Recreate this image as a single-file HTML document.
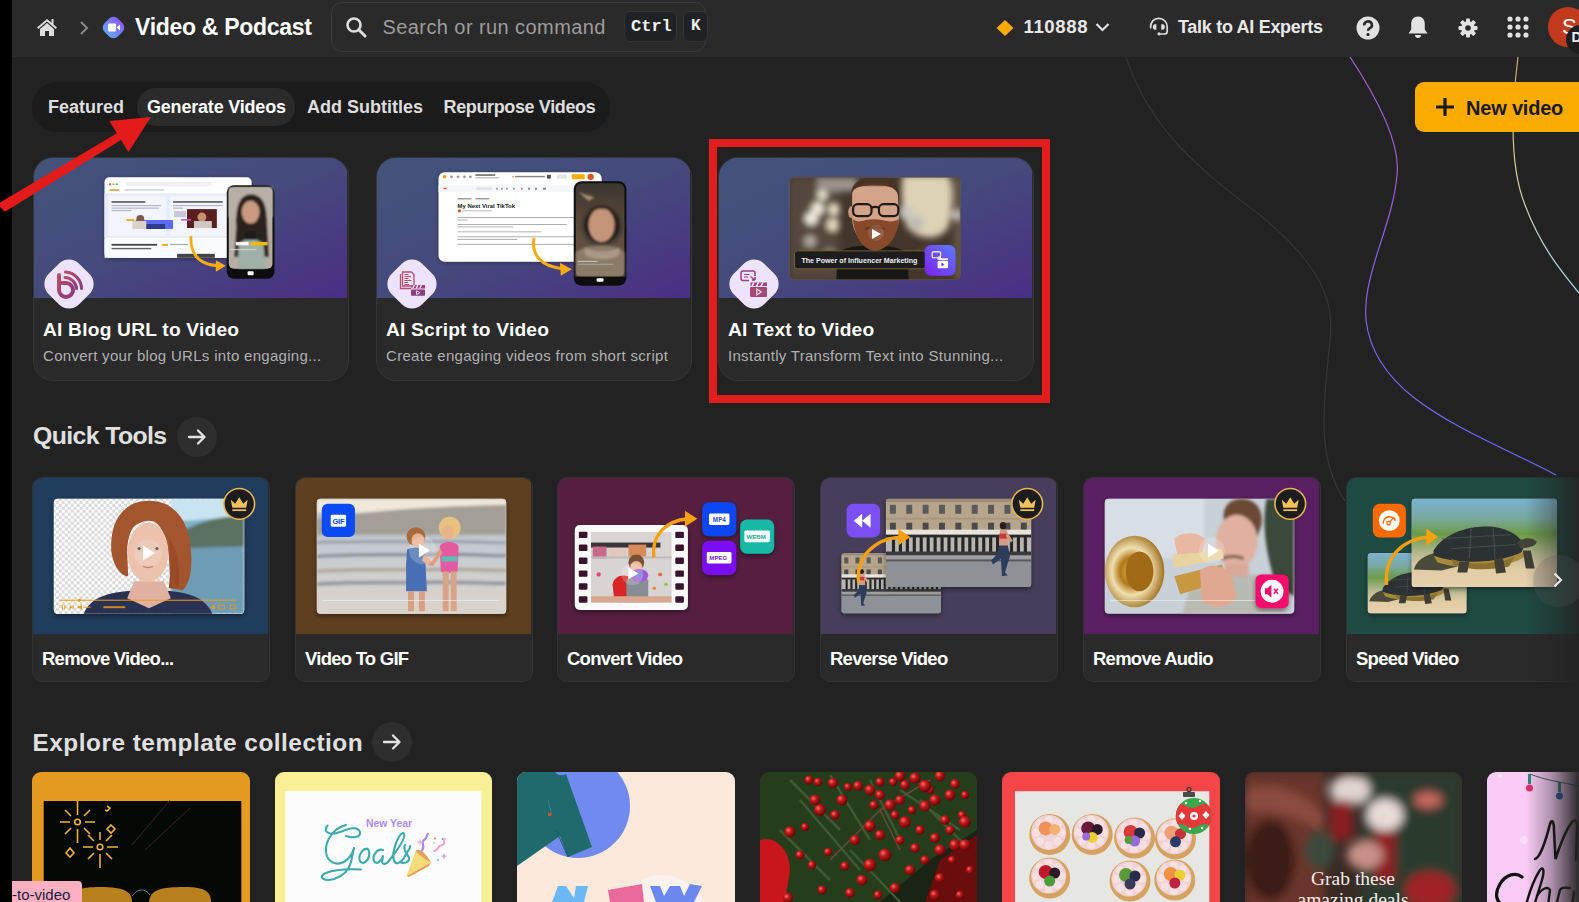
<!DOCTYPE html>
<html><head><meta charset="utf-8">
<style>
*{box-sizing:border-box;margin:0;padding:0}
html,body{width:1579px;height:902px;overflow:hidden;background:#222222;font-family:"Liberation Sans",sans-serif;color:#fff}
body{position:relative}
.a{position:absolute}
.strip{left:0;top:0;width:12px;height:902px;background:#000}
.hdr{left:12px;top:0;width:1567px;height:57px;background:#2a2a2a}
.t{position:absolute;white-space:nowrap;line-height:1}
.b{font-weight:bold}
.card{position:absolute;top:157px;width:316px;height:224px;border-radius:20px;background:#2a2a2a;border:1px solid #363636;overflow:hidden}
.card .img{position:absolute;left:-1px;top:-1px;width:100%;height:141px;background:linear-gradient(110deg,#40557a 0%,#444a7c 50%,#4a3282 100%)}
.card .ic{position:absolute;left:10px;top:101px;width:50px;height:50px}
.card .ttl{position:absolute;left:9px;top:161.8px;font-size:19.2px;letter-spacing:0.2px;font-weight:bold;color:#fff;white-space:nowrap;line-height:1}
.card .sub{position:absolute;left:9px;top:189.5px;font-size:15px;letter-spacing:0.3px;color:#b0b0b0;white-space:nowrap;line-height:1}
.qc{position:absolute;top:477px;width:238px;height:205px;border-radius:10px;background:#2a2a2a;border:1px solid #333;overflow:hidden}
.qc .img{position:absolute;left:-1px;top:-1px;width:100%;height:157px}
.qc .ttl{position:absolute;left:9px;top:171.8px;font-size:18.5px;letter-spacing:-0.75px;font-weight:bold;color:#fff;white-space:nowrap;line-height:1}
.tc{position:absolute;top:772px;width:218px;height:140px;border-radius:8px;overflow:hidden}
</style></head>
<body>
<div class="a strip"></div>
<div class="a hdr"></div>

<!-- background curves -->
<svg class="a" style="left:0;top:57px" width="1579" height="845" viewBox="0 57 1579 845">
  <path d="M1126 57 C1150 130 1200 170 1260 215 C1320 265 1335 300 1330 340 C1322 420 1318 460 1345 501" fill="none" stroke="#363636" stroke-width="1.2"/>
  <defs><linearGradient id="pgr" gradientUnits="userSpaceOnUse" x1="0" y1="57" x2="0" y2="475"><stop offset="0" stop-color="#a85cd0"/><stop offset="0.5" stop-color="#8a60e8"/><stop offset="1" stop-color="#6a6af8"/></linearGradient><linearGradient id="ygr" gradientUnits="userSpaceOnUse" x1="0" y1="57" x2="0" y2="293"><stop offset="0" stop-color="#c8a860"/><stop offset="0.5" stop-color="#d8d0a0"/><stop offset="1" stop-color="#a0d8e8"/></linearGradient></defs><path d="M1350 57 C1385 110 1400 150 1397 175 C1393 225 1362 275 1366 320 C1375 400 1470 430 1556 475" fill="none" stroke="url(#pgr)" stroke-width="1.2"/>
  <path d="M1518 57 C1510 120 1511 170 1525 205 C1540 245 1560 270 1579 293" fill="none" stroke="url(#ygr)" stroke-width="1.2"/>
</svg>

<!-- header content -->
<svg class="a" style="left:36px;top:18px" width="22" height="18" viewBox="0 0 22 18"><path d="M11 1 L1 9.5 L2.3 11 L11 3.6 L19.7 11 L21 9.5 L17.5 6.5 L17.5 1 L15.5 1 L15.5 4.8 Z M4 11 L4 18 L9 18 L9 13 L13 13 L13 18 L18 18 L18 11 L11 5 Z" fill="#dcdcdc"/></svg>
<svg class="a" style="left:79px;top:21px" width="10" height="14" viewBox="0 0 10 14"><path d="M2 1 L8 7 L2 13" fill="none" stroke="#8a8a8a" stroke-width="2"/></svg>
<svg class="a" style="left:102px;top:16px" width="23" height="23" viewBox="0 0 23 23"><defs><linearGradient id="vg" x1="0" y1="0" x2="0" y2="1"><stop offset="0" stop-color="#8b5cf6"/><stop offset="1" stop-color="#60a5fa"/></linearGradient></defs><rect x="2" y="2" width="19" height="19" rx="6.5" transform="rotate(45 11.5 11.5)" fill="url(#vg)"/><rect x="6" y="7.5" width="8" height="8" rx="1" fill="#fff"/><path d="M14.5 11.5 L18 8.5 L18 14.5 Z" fill="#fff"/></svg>
<div class="t b" style="left:135px;top:16px;font-size:23px;color:#fff;letter-spacing:-0.3px">Video &amp; Podcast</div>

<div class="a" style="left:331px;top:2px;width:375px;height:50px;border:1px solid #3b3b3b;border-radius:11px;background:#2a2a2a"></div>
<svg class="a" style="left:345px;top:16px" width="22" height="22" viewBox="0 0 22 22"><circle cx="9" cy="9" r="6.5" fill="none" stroke="#dedede" stroke-width="2.6"/><path d="M13.8 13.8 L20 20" stroke="#dedede" stroke-width="3" stroke-linecap="round"/></svg>
<div class="t" style="left:382.5px;top:17px;font-size:20px;letter-spacing:0.42px;color:#9d9d9d">Search or run command</div>
<div class="a" style="left:624px;top:11px;width:53px;height:31px;border:1px solid #333;border-radius:6px;background:#202124"></div>
<div class="t b" style="left:631px;top:18px;font-family:'Liberation Mono',monospace;font-size:17px;color:#f0f0f0">Ctrl</div>
<div class="a" style="left:683px;top:11px;width:25px;height:31px;border:1px solid #333;border-radius:6px;background:#202124"></div>
<div class="t b" style="left:691px;top:18px;font-family:'Liberation Mono',monospace;font-size:16px;color:#f0f0f0">K</div>

<svg class="a" style="left:996px;top:20px" width="18" height="16" viewBox="0 0 18 16"><path d="M9 0 L17.5 8 L9 16 L0.5 8 Z" fill="#f9ab00"/></svg>
<div class="t b" style="left:1023.5px;top:17.8px;font-size:18.6px;letter-spacing:0.6px;color:#e8e8e8">110888</div>
<svg class="a" style="left:1095px;top:22px" width="15" height="10" viewBox="0 0 15 10"><path d="M1.5 2 L7.5 8 L13.5 2" fill="none" stroke="#e0e0e0" stroke-width="2.2"/></svg>
<svg class="a" style="left:1149px;top:17px" width="20" height="20" viewBox="0 0 20 20"><path d="M1.6 10.8 C1.3 5 5 1.3 9.8 1.3 C14.6 1.3 18.2 5 18.2 9.8 V14.5 C18.2 16.3 17 17 15.2 17 H10.5" fill="none" stroke="#dcdcdc" stroke-width="1.7" stroke-linecap="round"/><path d="M7.4 7.2 V12.7 H6 A2.2 2.75 0 0 1 6 7.2 Z" fill="#dcdcdc"/><path d="M12.2 7.2 V12.7 H13.6 A2.2 2.75 0 0 0 13.6 7.2 Z" fill="#dcdcdc"/><circle cx="10" cy="16.8" r="1.6" fill="#dcdcdc"/></svg>
<div class="t b" style="left:1178px;top:17.8px;font-size:18px;letter-spacing:-0.3px;color:#e8e8e8">Talk to AI Experts</div>
<svg class="a" style="left:1356px;top:16px" width="24" height="24" viewBox="0 0 24 24"><circle cx="12" cy="12" r="11.5" fill="#e2e2e2"/><path d="M8.3 9.3 A3.8 3.6 0 1 1 13.5 12.3 C12.3 12.9 12 13.5 12 14.8" fill="none" stroke="#2a2a2a" stroke-width="2.6"/><circle cx="12" cy="18.5" r="1.6" fill="#2a2a2a"/></svg>
<svg class="a" style="left:1407px;top:15px" width="22" height="24" viewBox="0 0 22 24"><path d="M11 1.5 C6.5 1.5 4.2 5 4.2 9 V14.5 L1.5 18.5 H20.5 L17.8 14.5 V9 C17.8 5 15.5 1.5 11 1.5 Z" fill="#e2e2e2"/><path d="M8 20 A3 3 0 0 0 14 20 Z" fill="#e2e2e2"/></svg>
<svg class="a" style="left:1458px;top:18px" width="20" height="20" viewBox="0 0 20 20"><g fill="#e2e2e2"><circle cx="10" cy="10" r="6.8"/><rect x="8" y="0.5" width="4" height="19" rx="1"/><rect x="8" y="0.5" width="4" height="19" rx="1" transform="rotate(45 10 10)"/><rect x="8" y="0.5" width="4" height="19" rx="1" transform="rotate(90 10 10)"/><rect x="8" y="0.5" width="4" height="19" rx="1" transform="rotate(135 10 10)"/></g><circle cx="10" cy="10" r="2.8" fill="#2a2a2a"/></svg>
<svg class="a" style="left:1507px;top:16px" width="22" height="22" viewBox="0 0 22 22"><g fill="#e2e2e2"><circle cx="3" cy="3" r="2.6"/><circle cx="11" cy="3" r="2.6"/><circle cx="19" cy="3" r="2.6"/><circle cx="3" cy="11" r="2.6"/><circle cx="11" cy="11" r="2.6"/><circle cx="19" cy="11" r="2.6"/><circle cx="3" cy="19" r="2.6"/><circle cx="11" cy="19" r="2.6"/><circle cx="19" cy="19" r="2.6"/></g></svg>
<div class="a" style="left:1548px;top:7px;width:40px;height:40px;border-radius:50%;background:#c23a1c"></div>
<div class="t" style="left:1562px;top:16px;font-size:22px;color:#fff">S</div>
<div class="a" style="left:1565.5px;top:24.7px;width:29px;height:29px;border-radius:50%;background:#1e1e1e"></div>
<div class="t b" style="left:1571.5px;top:30px;font-size:14px;color:#e8f0f8">D</div>

<!-- tabs -->
<div class="a" style="left:32px;top:82px;width:578px;height:50px;border-radius:25px;background:#1b1b1b"></div>
<div class="a" style="left:137px;top:88px;width:158px;height:38px;border-radius:19px;background:#2b2b2b"></div>
<div class="t b" style="left:48px;top:98px;font-size:18px;color:#dedede">Featured</div>
<div class="t b" style="left:147px;top:98px;font-size:18px;letter-spacing:-0.2px;color:#fff">Generate Videos</div>
<div class="t b" style="left:307px;top:98px;font-size:18px;color:#dedede">Add Subtitles</div>
<div class="t b" style="left:443.5px;top:98px;font-size:18px;letter-spacing:-0.37px;color:#dedede">Repurpose Videos</div>

<!-- new video -->
<div class="a" style="left:1415px;top:82px;width:180px;height:50px;border-radius:9px;background:#f9ab00"></div>
<svg class="a" style="left:1435px;top:97px" width="20" height="20" viewBox="0 0 20 20"><path d="M10 1 V19 M1 10 H19" stroke="#1a1a1a" stroke-width="3.2"/></svg>
<div class="t b" style="left:1466px;top:97.5px;font-size:20px;letter-spacing:-0.2px;color:#1a1a1a">New video</div>

<!-- feature cards -->
<div class="card" style="left:33px">
  <svg class="img" width="316" height="141" viewBox="0 0 316 141">
<defs>
<linearGradient id="cg" x1="0" y1="0" x2="1" y2="1"><stop offset="0" stop-color="#42547a"/><stop offset="0.5" stop-color="#454a7c"/><stop offset="1" stop-color="#4a2e84"/></linearGradient>
<filter id="bl1"><feGaussianBlur stdDeviation="1.2"/></filter>
<filter id="sh"><feDropShadow dx="0" dy="1" stdDeviation="2" flood-color="#000" flood-opacity="0.35"/></filter>
</defs>
<rect width="316" height="141" fill="url(#cg)"/>
<!-- browser -->
<g filter="url(#sh)"><rect x="72" y="20" width="148" height="81" rx="5" fill="#fff"/></g>
<circle cx="77.5" cy="27" r="1.1" fill="#ef4444"/><circle cx="81" cy="27" r="1.1" fill="#f59e0b"/><circle cx="84.5" cy="27" r="1.1" fill="#22c55e"/>
<rect x="94" y="24.5" width="86" height="4.5" rx="2" fill="#eef0f4"/>
<rect x="77" y="32" width="10" height="1.6" fill="#c9a33a"/>
<rect x="92" y="32" width="40" height="1.4" fill="#c8ccd6"/>
<rect x="72" y="36" width="148" height="45" fill="#e6ecfb"/>
<rect x="76" y="39" width="58" height="40" rx="1.5" fill="#f2f5fd"/>
<rect x="138" y="39" width="60" height="40" rx="1.5" fill="#f2f5fd"/>
<rect x="79" y="44" width="34" height="1.6" fill="#555"/>
<rect x="79" y="48" width="50" height="1" fill="#aab"/><rect x="79" y="50.5" width="48" height="1" fill="#aab"/><rect x="79" y="53" width="20" height="1" fill="#aab"/>
<rect x="141" y="44" width="50" height="1.6" fill="#555"/>
<rect x="141" y="48" width="50" height="1" fill="#aab"/><rect x="141" y="50.5" width="10" height="1" fill="#aab"/>
<rect x="103" y="63" width="38" height="9" rx="1" fill="#5b6cf0"/>
<rect x="111" y="67" width="22" height="5" fill="#2b3a8a"/>
<circle cx="108" cy="62" r="4" fill="#7a5a48"/><rect x="100" y="64" width="14" height="8" fill="#d9d3cc"/>
<rect x="94" y="62" width="8" height="2" fill="#f5a623"/>
<rect x="155" y="52" width="30" height="19" fill="#5a1e1e"/><circle cx="170" cy="60" r="4.5" fill="#c89070"/><rect x="162" y="64" width="18" height="7" fill="#cfc8c2"/>
<rect x="142" y="54" width="12" height="6" fill="#c8c8d8"/><rect x="149" y="62" width="10" height="1.6" fill="#c05ae0"/>
<rect x="72" y="82" width="148" height="19" fill="#fafbfe"/>
<rect x="79" y="87" width="46" height="1.8" fill="#444"/><rect x="79" y="91" width="40" height="1.4" fill="#666"/>
<rect x="130" y="87" width="6" height="2" fill="#f5a623"/><rect x="138" y="87" width="18" height="1.2" fill="#aaa"/>
<rect x="145" y="97" width="18" height="4" fill="#444"/><rect x="165" y="97" width="18" height="4" fill="#444"/>
<!-- arrow -->
<path d="M159 79 C158 100 170 108 186 109" fill="none" stroke="#f9ab10" stroke-width="2.8"/>
<path d="M184 103.5 L194 109 L184 115 Z" fill="#f9ab10"/>
<!-- phone -->
<rect x="195" y="28" width="48" height="94" rx="7" fill="#0d0d0d"/>
<rect x="197" y="30" width="44" height="82" rx="5" fill="#b6aea4"/>
<g filter="url(#bl1)">
<rect x="197" y="30" width="44" height="30" fill="#b8b0a6"/>
<path d="M205 70 C203 50 208 37 219 37 C231 37 236 48 235 66 L237 100 L203 100 Z" fill="#2a201c"/>
<ellipse cx="219" cy="55" rx="9" ry="11.5" fill="#c99a80"/>
<path d="M206 112 L207 88 C212 80 226 80 232 88 L234 112 Z" fill="#9fb0a6"/>
<rect x="214" y="75" width="10" height="8" fill="#1a1a1a"/>
</g>
<rect x="204" y="85" width="13" height="3.5" fill="#fff" opacity="0.9"/><rect x="219" y="85" width="17" height="3.5" fill="#f5b800"/>
<rect x="199" y="92" width="26" height="1.4" fill="#e0e0e0" opacity="0.7"/>
<rect x="197" y="113" width="44" height="7" fill="#0d0d0d"/>
<rect x="216" y="114.5" width="6" height="4" rx="1" fill="#fff"/>
</svg>
  <svg class="ic" viewBox="0 0 50 50"><defs><linearGradient id="mg" x1="0" y1="0" x2="1" y2="1"><stop offset="0" stop-color="#b84e6c"/><stop offset="1" stop-color="#8c3a7c"/></linearGradient></defs><rect x="3.5" y="3.5" width="43" height="43" rx="14" transform="rotate(45 25 25)" fill="#ede3fc"/><path d="M15 16 L15 31 A7 7 0 1 0 22 24 L17.5 24" fill="none" stroke="url(#mg)" stroke-width="4" stroke-linecap="round"/><path d="M20 27.5 L25.5 31 L20 34.5 Z" fill="#ede3fc"/><path d="M21 18.5 A12 12 0 0 1 32.5 29.5" fill="none" stroke="url(#mg)" stroke-width="3" stroke-linecap="round"/><path d="M21.5 13 A17 17 0 0 1 37.5 29.5" fill="none" stroke="url(#mg)" stroke-width="3" stroke-linecap="round"/></svg>
  <div class="ttl">AI Blog URL to Video</div>
  <div class="sub">Convert your blog URLs into engaging...</div>
</div>
<div class="card" style="left:376px">
  <svg class="img" width="316" height="141" viewBox="0 0 316 141">
<rect width="316" height="141" fill="url(#cg)"/>
<g filter="url(#sh)"><rect x="63" y="15" width="164" height="90" rx="6" fill="#fff"/></g>
<rect x="63" y="28" width="164" height="7" fill="#f6f7f9"/>
<circle cx="69" cy="19.5" r="1.8" fill="#f59e0b"/>
<g fill="#9a9a9a"><circle cx="76" cy="19.5" r="1.4"/><circle cx="82.5" cy="19.5" r="1.4"/><circle cx="89" cy="19.5" r="1.4"/><circle cx="95" cy="19.5" r="1.4"/></g>
<rect x="100" y="17" width="20" height="1.4" fill="#555"/><rect x="100" y="20" width="24" height="1" fill="#aaa"/>
<rect x="140" y="18.5" width="30" height="1.5" fill="#888"/><circle cx="138" cy="19.3" r="1" fill="#f5a623"/>
<rect x="197" y="17" width="13" height="5" rx="1" fill="#f9ab00"/>
<circle cx="216" cy="19.5" r="3.2" fill="#e0501c"/>
<rect x="172" y="17.5" width="4" height="4" rx="1" fill="#555"/><rect x="182" y="17.5" width="10" height="4" rx="1" fill="#e5e5e5"/>
<rect x="68" y="30.5" width="3" height="1.5" fill="#e55"/>
<rect x="101" y="30" width="16" height="3" rx="1" fill="#e5e5e5"/>
<g fill="#888"><rect x="121" y="30.5" width="1.5" height="2"/><rect x="126" y="30.5" width="1.5" height="2"/><rect x="131" y="30.5" width="1.5" height="2"/><rect x="138" y="30.5" width="1.5" height="2"/><rect x="146" y="30.5" width="1.5" height="2"/><rect x="153" y="30.5" width="2" height="2"/><rect x="160" y="30.5" width="2" height="2"/><rect x="168" y="30.5" width="3" height="2"/></g>
<rect x="82" y="41" width="14" height="1.2" fill="#888"/><rect x="100" y="41" width="14" height="1.2" fill="#888"/>
<text x="82" y="50.6" font-family="Liberation Sans" font-weight="bold" font-size="6" fill="#1a1a2a">My Next Viral TikTok</text>
<circle cx="84" cy="53.7" r="1.6" fill="#e0501c"/><rect x="87" y="53.2" width="30" height="1" fill="#bbb"/>
<g fill="#9a9a9a">
<rect x="82" y="60" width="140" height="0.8"/><rect x="82" y="62.5" width="10" height="0.8"/>
<rect x="82" y="67" width="110" height="0.8"/><rect x="82" y="69.5" width="56" height="0.8"/>
<rect x="82" y="74.5" width="84" height="0.8"/>
<rect x="82" y="79.5" width="138" height="0.8"/><rect x="82" y="82" width="60" height="0.8"/>
<rect x="82" y="87" width="140" height="0.8"/>
</g>
<path d="M159 81 C156 100 168 110 188 112" fill="none" stroke="#f9ab10" stroke-width="3"/>
<path d="M185 106 L197 112.5 L186 119 Z" fill="#f9ab10"/>
<!-- phone -->
<rect x="199" y="24" width="53" height="105" rx="8" fill="#0d0d0d"/>
<defs><linearGradient id="astro" x1="0" y1="0" x2="0" y2="1"><stop offset="0" stop-color="#3a3630"/><stop offset="0.4" stop-color="#5a4838"/><stop offset="1" stop-color="#6a5a48"/></linearGradient></defs>
<rect x="201" y="26" width="49" height="94" rx="6" fill="url(#astro)"/>
<g filter="url(#bl1)">
<path d="M204 35 L220 40 L214 44 Z" fill="#c8a888" opacity="0.7"/>
<circle cx="227.5" cy="68" r="22" fill="#4a4038"/>
<circle cx="227.5" cy="68" r="18.5" fill="#2a2420"/>
<ellipse cx="227" cy="68" rx="13" ry="17" fill="#c49478"/>
<path d="M214 58 C216 50 238 50 240 58 L240 54 C236 46 218 46 214 54 Z" fill="#3a2a20"/>
<path d="M201 120 L201 96 C210 86 245 86 250 96 L250 120 Z" fill="#8a7a68"/>
<path d="M210 90 C218 96 238 96 245 90 L245 98 C238 104 218 104 210 98 Z" fill="#a89884"/>
</g>
<rect x="203" y="104" width="20" height="1.2" fill="#ddd" opacity="0.7"/><rect x="203" y="107" width="36" height="0.9" fill="#ccc" opacity="0.6"/>
<rect x="201" y="120" width="49" height="7" fill="#0d0d0d"/>
<rect x="222" y="121.5" width="7" height="3.5" rx="1" fill="#fff"/>
</svg>
  <svg class="ic" viewBox="0 0 50 50"><rect x="3.5" y="3.5" width="43" height="43" rx="14" transform="rotate(45 25 25)" fill="#ede3fc"/><g fill="none" stroke="#b84e6c" stroke-width="1.3"><path d="M15.5 13 L24.5 13 L27 15.5 L27 27 L15.5 27 Z"/><path d="M13.5 15 L13.5 29.5 L24 29.5"/></g><g stroke="#b84e6c" stroke-width="1.1"><path d="M17.5 15.5 H21.5 M17.5 17.5 H24 M17.5 19.5 H21.5 M17.5 21.5 H24.5 M17.5 23.5 H21 M17.5 25.5 H22"/></g><rect x="24" y="30.5" width="14" height="6.3" rx="1" fill="#8e3c7c"/><path d="M24.5 26 L38 26 L38 29.5 L24.5 29.5 Z" fill="#9c4076"/><g fill="#ede3fc"><path d="M26.5 26 L28 26 L26.5 29.5 L25 29.5Z M30 26 L31.5 26 L30 29.5 L28.5 29.5Z M33.5 26 L35 26 L33.5 29.5 L32 29.5Z"/></g><path d="M29.5 31.8 L33 33.7 L29.5 35.6 Z" fill="none" stroke="#ede3fc" stroke-width="0.9"/></svg>
  <div class="ttl">AI Script to Video</div>
  <div class="sub">Create engaging videos from short script</div>
</div>
<div class="card" style="left:718px">
  <svg class="img" width="316" height="141" viewBox="0 0 316 141">
<defs>
<filter id="bl3" x="-20%" y="-20%" width="140%" height="140%"><feGaussianBlur stdDeviation="3.2"/></filter>
<filter id="bl4"><feGaussianBlur stdDeviation="0.8"/></filter>
<clipPath id="vc"><rect x="72" y="20" width="172" height="103" rx="5"/></clipPath>
<linearGradient id="pg" x1="1" y1="0" x2="0" y2="1"><stop offset="0" stop-color="#5b7af7"/><stop offset="1" stop-color="#7c22ee"/></linearGradient>
</defs>
<rect width="316" height="141" fill="url(#cg)"/>
<g clip-path="url(#vc)">
<rect x="72" y="20" width="172" height="103" fill="#43372c"/>
<g filter="url(#bl3)">
<rect x="72" y="20" width="50" height="103" fill="#54463a"/>
<rect x="100" y="20" width="40" height="14" fill="#9a948c"/>
<circle cx="105" cy="38" r="5" fill="#efe6d6"/>
<circle cx="100.3" cy="51.3" r="6.4" fill="#f2ead8"/><circle cx="116.8" cy="52.5" r="5.7" fill="#efe4cc"/>
<circle cx="93.9" cy="61.5" r="6.4" fill="#f6efe2"/><circle cx="115.6" cy="67.8" r="6.4" fill="#e8dcc4"/>
<circle cx="92.6" cy="84.4" r="6" fill="#b0aaa0"/><circle cx="112" cy="96" r="5" fill="#8a847a"/>
<path d="M186 18 L232 18 C238 30 236 50 232 70 C222 86 200 82 190 70 C184 50 184 30 186 18 Z" fill="#ddd2b6"/>
<circle cx="189.5" cy="55" r="7.6" fill="#c8c6c2"/><circle cx="199.7" cy="66.5" r="7" fill="#bcbab6"/>
<rect x="238" y="20" width="8" height="103" fill="#6a5a4a"/>
<circle cx="240" cy="58" r="5" fill="#cfcac4"/>
<circle cx="210" cy="100" r="8" fill="#5a4a3a"/>
</g>
<g filter="url(#bl4)">
<path d="M119 123 L121 96 C128 86 182 86 190 96 L192 123 Z" fill="#151414"/>
<path d="M134 40 C133 26 143 20 158 20 C174 20 183 26 182 42 L181 50 L135 50 Z" fill="#4a3222"/>
<path d="M135 36 C136 30 145 28 158 28 C172 28 180 31 181 38 L182 62 C181 78 172 88 158 90 C145 88 136 78 135 62 Z" fill="#d4a48a"/>
<ellipse cx="134" cy="55" rx="3" ry="6" fill="#c8947a"/>
<path d="M136 62 C137 80 146 93 158 94 C171 93 181 80 182 62 C176 66 170 64 165 63 C160 62 154 62 149 63 C144 64 140 66 136 62 Z" fill="#86482a"/>
<path d="M148 72 C152 70 164 70 168 72" stroke="#6a3a22" stroke-width="2" fill="none"/>
<rect x="147" y="25" width="24" height="4" fill="#5a3a28" opacity="0.6"/>
</g>
<g fill="none" stroke="#1e1a18" stroke-width="2.2"><rect x="136" y="47" width="18.5" height="12" rx="4.5"/><rect x="162" y="47" width="19.5" height="12" rx="4.5"/><path d="M154.5 50.5 Q158 49 162 50.5"/></g>
<circle cx="159" cy="76" r="8" fill="#fff" opacity="0.12"/>
<path d="M155 72 L164 77 L155 82 Z" fill="#fff"/>
<rect x="77" y="94" width="132" height="18" rx="3" fill="#1c1c1e" stroke="#8a6a30" stroke-width="0.8"/>
<text x="84" y="106" font-family="Liberation Sans" font-weight="bold" font-size="7.15" fill="#f2f2f2">The Power of Influencer Marketing</text>
</g>
<rect x="72" y="20" width="172" height="103" rx="5" fill="none" stroke="#6a5a40" stroke-width="0.6"/>
<rect x="208" y="88" width="31" height="31" rx="6" fill="url(#pg)"/>
<g fill="none" stroke="#fff" stroke-width="1.1"><rect x="215.5" y="95" width="8.5" height="6" rx="1"/><path d="M222 99.5 L225 102.5"/></g>
<rect x="221" y="104" width="10.5" height="7.5" rx="1" fill="#fff"/><path d="M224.8 105.6 L228 107.7 L224.8 109.8 Z" fill="#7c3aed"/>
<rect x="221" y="101.5" width="10.5" height="1.6" fill="#fff"/>
</svg>
  <svg class="ic" viewBox="0 0 50 50"><rect x="3.5" y="3.5" width="43" height="43" rx="14" transform="rotate(45 25 25)" fill="#ede3fc"/><g fill="none" stroke="#9a4080" stroke-width="1.5"><path d="M26 17 L26 14 A2 2 0 0 0 24 12 L14 12 A2 2 0 0 0 12 14 L12 19.5 A2 2 0 0 0 14 21.5 L20 21.5"/><path d="M21.5 17.5 L26 21 M26 21 L26 18 M26 21 L23 21"/></g><g stroke="#9a4080" stroke-width="1.1"><path d="M15 15.5 H20.5 M15 18 H19"/></g><rect x="21" y="28" width="17" height="10" rx="1.2" fill="#a44a72"/><path d="M21.5 23.5 L38 23.5 L38 27 L21.5 27 Z" fill="#9c4478"/><g fill="#ede3fc"><path d="M24 23.5 L25.8 23.5 L24 27 L22.2 27Z M28.5 23.5 L30.3 23.5 L28.5 27 L26.7 27Z M33 23.5 L34.8 23.5 L33 27 L31.2 27Z"/></g><path d="M27.8 30 L32.3 33 L27.8 36 Z" fill="none" stroke="#ede3fc" stroke-width="1.1"/></svg>
  <div class="ttl">AI Text to Video</div>
  <div class="sub">Instantly Transform Text into Stunning...</div>
</div>
<div class="a" style="left:709px;top:139px;width:341px;height:264px;border:8px solid #e31c1c"></div>

<!-- quick tools -->
<div class="t b" style="left:33px;top:424.3px;font-size:24.8px;letter-spacing:-0.6px;color:#e0e0e0">Quick Tools</div>
<div class="a" style="left:177px;top:417px;width:40px;height:40px;border-radius:50%;background:#2e2e2e"><svg width="40" height="40" viewBox="0 0 40 40" style="position:absolute;left:0;top:0"><path d="M12 20 H27.5 M21 13.5 L27.5 20 L21 26.5" fill="none" stroke="#e2e2e2" stroke-width="2.3" stroke-linecap="round" stroke-linejoin="round"/></svg></div>

<div class="qc" style="left:32px"><svg class="img" width="238" height="158" viewBox="0 0 238 158" preserveAspectRatio="none">
<defs>
<pattern id="chk" width="6" height="6" patternUnits="userSpaceOnUse"><rect width="6" height="6" fill="#fff"/><rect width="3" height="3" fill="#d9d9d9"/><rect x="3" y="3" width="3" height="3" fill="#d9d9d9"/></pattern>
<clipPath id="q1c"><rect x="22" y="22" width="192" height="115.5" rx="4"/></clipPath>
<filter id="qb"><feGaussianBlur stdDeviation="1.5"/></filter>
<filter id="qb2"><feGaussianBlur stdDeviation="0.7"/></filter>
<filter id="qsh"><feDropShadow dx="0" dy="2" stdDeviation="2.5" flood-color="#000" flood-opacity="0.45"/></filter>
</defs>
<rect width="238" height="158" fill="#1f3d5c"/>
<g filter="url(#qsh)"><rect x="22" y="22" width="192" height="115.5" rx="4" fill="#fff"/></g>
<g clip-path="url(#q1c)">
<rect x="22" y="22" width="192" height="116" fill="url(#chk)"/>
<g filter="url(#qb)">
<path d="M140 22 L214 22 L214 138 L145 138 Z" fill="#7fb0c8"/>
<path d="M140 22 L214 22 L214 40 L140 45 Z" fill="#c8e4f0"/>
<path d="M150 55 C170 45 190 38 214 40 L214 70 L150 72 Z" fill="#5a7060"/>
<path d="M140 72 L214 70 L214 138 L140 138 Z" fill="#6e9cb4"/>
</g>
<g filter="url(#qb2)">
<path d="M52 138 C58 122 75 114 118 114 C160 114 175 122 182 138 Z" fill="#2b3152"/>
<path d="M103 105 L133 105 L140 122 L118 132 L96 122 Z" fill="#e0b0a0"/>
<path d="M80 75 C78 42 94 24 118 24 C142 24 158 42 160 72 C162 92 160 106 152 114 L140 112 L138 80 C136 56 128 44 116 42 C104 42 96 56 96 76 L97 100 C90 100 82 90 80 75 Z" fill="#a3552e"/>
<ellipse cx="117" cy="76" rx="20.5" ry="30" fill="#ecc2ac"/>
<path d="M96 50 C102 36 112 33 124 34 C138 36 146 44 150 58 C140 48 128 44 116 44 C106 46 100 50 96 60 Z" fill="#a3552e"/>
<path d="M138 62 C146 70 150 90 148 112 L138 112 C140 95 140 78 138 62 Z" fill="#9a4c28"/></g>
<circle cx="108" cy="72" r="1.6" fill="#3a4a6a"/><circle cx="126" cy="72" r="1.6" fill="#3a4a6a"/>
<path d="M112 90 Q117 92 122 90" stroke="#c07a70" stroke-width="1.5" fill="none"/>
<circle cx="117" cy="77" r="14" fill="#fff" opacity="0.15"/>
<path d="M112 69 L124 76.5 L112 84 Z" fill="#fff"/>
<rect x="28" y="123.5" width="178" height="1" fill="#f39c12"/>
<circle cx="48" cy="124" r="1.5" fill="#f39c12"/>
<g fill="#f39c12"><rect x="30" y="129" width="1.2" height="4"/><rect x="32.5" y="129" width="1.2" height="4"/><path d="M38 129 L41 131 L38 133Z"/><rect x="41" y="129" width="1" height="4"/><path d="M46 130 L48 130 L50.5 128.5 L50.5 133.5 L48 132 L46 132Z"/><rect x="53" y="130.5" width="6" height="1"/><rect x="72" y="130" width="22" height="2" opacity="0.8"/><circle cx="183" cy="131" r="2"/><rect x="188" y="129" width="6" height="4" fill="none" stroke="#f39c12" stroke-width="0.8"/><rect x="200" y="129" width="5" height="4" fill="none" stroke="#f39c12" stroke-width="0.8"/></g>
</g>
<circle cx="209" cy="27" r="15.5" fill="#1c1c1c" stroke="#e9b64e" stroke-width="1.6"/><path d="M200.5 23 L205 27 L209 20.5 L213 27 L217.5 23 L216 31 L202 31 Z" fill="#f2c15a"/><rect x="202" y="32.5" width="14" height="1.8" fill="#f2c15a"/>
</svg><div class="ttl">Remove Video...</div></div>
<div class="qc" style="left:295px"><svg class="img" width="238" height="158" viewBox="0 0 238 158" preserveAspectRatio="none">
<defs><clipPath id="q2c"><rect x="22" y="22" width="191" height="115.5" rx="4"/></clipPath>
<linearGradient id="sea" x1="0" y1="0" x2="0" y2="1"><stop offset="0" stop-color="#b4bcc6"/><stop offset="0.5" stop-color="#c8ccd0"/><stop offset="1" stop-color="#dcd4cc"/></linearGradient></defs>
<rect width="238" height="158" fill="#5e3f1f"/>
<g filter="url(#qsh)"><rect x="22" y="22" width="191" height="115.5" rx="4" fill="#ddd"/></g>
<g clip-path="url(#q2c)">
<rect x="22" y="22" width="191" height="116" fill="url(#sea)"/>
<g filter="url(#qb)">
<rect x="22" y="22" width="191" height="14" fill="#f0e8da"/>
<path d="M22 42 C60 36 120 30 213 28 L213 58 L22 58 Z" fill="#a39e96"/>
<path d="M22 80 C60 77 100 79 140 78 C180 77 200 80 213 79" stroke="#7a808a" stroke-width="2.5" fill="none"/>
<path d="M22 95 C60 92 100 94 140 93 C180 92 200 95 213 94" stroke="#a89a8a" stroke-width="2.5" fill="none"/>
<path d="M22 108 C60 105 100 107 140 106 C180 105 200 108 213 107" stroke="#8a8a94" stroke-width="3" fill="none"/>
<path d="M22 66 C60 64 100 66 140 65 C180 64 200 67 213 66" stroke="#8a909a" stroke-width="2" fill="none"/>
</g>
<g filter="url(#qb2)">
<circle cx="122" cy="60" r="9.5" fill="#a66a3a"/>
<ellipse cx="124" cy="64" rx="6.5" ry="7.5" fill="#e8b090"/>
<path d="M112 88 L113 73 C118 70 128 70 131 75 L133 115 L112 115 Z" fill="#4a70b4"/>
<rect x="114" y="115" width="6" height="20" fill="#d8a080"/><rect x="125" y="115" width="6" height="20" fill="#d8a080"/>
<path d="M130 78 L140 86 L136 90 L128 84 Z" fill="#e0a888"/>
<circle cx="156" cy="51" r="11" fill="#e8c080"/>
<ellipse cx="154" cy="56" rx="6" ry="7" fill="#e8b48a"/>
<path d="M146 70 C148 64 162 64 165 70 L164 95 C158 97 150 97 147 95 Z" fill="#e45aa0"/>
<rect x="148" y="80" width="16" height="5" fill="#5ac0b8"/>
<rect x="149" y="95" width="6" height="40" fill="#d8a488"/><rect x="157" y="95" width="6" height="40" fill="#d8a488"/>
<path d="M146 72 L136 88 L139 90 L149 76 Z" fill="#dca080"/>
</g>
<circle cx="129" cy="74" r="14" fill="#fff" opacity="0.2"/>
<path d="M125 67 L136 74 L125 81 Z" fill="#fff"/>
<rect x="28" y="124" width="178" height="0.8" fill="#fff" opacity="0.6"/>
</g>
<rect x="27" y="27" width="33.5" height="33.5" rx="6" fill="#0a4bf5"/>
<rect x="36" y="38" width="15.5" height="12" rx="1.5" fill="#fff"/>
<text x="43.75" y="47.3" text-anchor="middle" font-family="Liberation Sans" font-weight="bold" font-size="7.6" fill="#0a4bf5" letter-spacing="-0.3">GIF</text>
</svg><div class="ttl">Video To GIF</div></div>
<div class="qc" style="left:557px"><svg class="img" width="238" height="158" viewBox="0 0 238 158" preserveAspectRatio="none">
<defs><clipPath id="q3c"><rect x="34.3" y="55" width="81.4" height="71.5"/></clipPath></defs>
<rect width="238" height="158" fill="#561f40"/>
<g filter="url(#qsh)"><rect x="18" y="48.4" width="114" height="85.4" rx="5" fill="#fbfbfb"/></g>
<rect x="22" y="55" width="8.7" height="6.5" rx="1.2" fill="#3a1428"/><rect x="119.3" y="55" width="8.7" height="6.5" rx="1.2" fill="#3a1428"/><rect x="22" y="68" width="8.7" height="6.5" rx="1.2" fill="#3a1428"/><rect x="119.3" y="68" width="8.7" height="6.5" rx="1.2" fill="#3a1428"/><rect x="22" y="81" width="8.7" height="6.5" rx="1.2" fill="#3a1428"/><rect x="119.3" y="81" width="8.7" height="6.5" rx="1.2" fill="#3a1428"/><rect x="22" y="94" width="8.7" height="6.5" rx="1.2" fill="#3a1428"/><rect x="119.3" y="94" width="8.7" height="6.5" rx="1.2" fill="#3a1428"/><rect x="22" y="107" width="8.7" height="6.5" rx="1.2" fill="#3a1428"/><rect x="119.3" y="107" width="8.7" height="6.5" rx="1.2" fill="#3a1428"/><rect x="22" y="120" width="8.7" height="6.5" rx="1.2" fill="#3a1428"/><rect x="119.3" y="120" width="8.7" height="6.5" rx="1.2" fill="#3a1428"/>
<g clip-path="url(#q3c)">
<rect x="34.3" y="55" width="81.4" height="71.5" fill="#d8d4d4"/>
<g filter="url(#qb2)">
<rect x="34.3" y="66" width="70" height="5" fill="#3a3438"/>
<rect x="36" y="70" width="14" height="12" fill="#c86a8a"/><rect x="52" y="72" width="18" height="8" fill="#e0c8c0"/><rect x="72" y="68" width="18" height="12" fill="#d88a58"/>
<rect x="34.3" y="80" width="81.4" height="2" fill="#bbb"/>
<path d="M58 126 L56 108 C58 98 70 96 78 104 L82 126 Z" fill="#d82828"/>
<circle cx="80" cy="86" r="8" fill="#7a5030"/>
<ellipse cx="80" cy="91" rx="6" ry="6.5" fill="#e8b8a0"/>
<path d="M70 126 L70 104 C74 98 88 98 92 104 L92 126 Z" fill="#888c94"/>
<ellipse cx="83" cy="99" rx="9" ry="6.5" fill="#a05ad8"/><circle cx="83" cy="99" r="3" fill="#5a8ac8"/>
<circle cx="104" cy="98" r="2" fill="#e06a4a"/><circle cx="110" cy="108" r="1.8" fill="#8ac84a"/><circle cx="98" cy="112" r="1.8" fill="#e08a3a"/><circle cx="42" cy="98" r="2.2" fill="#e84a6a"/>
<rect x="34.3" y="120" width="81.4" height="6.5" fill="#d8a890"/>
</g>
<circle cx="76" cy="98" r="11" fill="#fff" opacity="0.2"/>
<path d="M72 91 L82 97 L72 103 Z" fill="#fff"/>
</g>
<path d="M97.6 81 C95 58 110 44 132 42" fill="none" stroke="#f9a00e" stroke-width="3.4"/>
<path d="M129 34 L141.5 42 L129 50 Z" fill="#f9a00e"/>
<g filter="url(#qsh)">
<rect x="146.4" y="25.3" width="34.4" height="34.4" rx="7" fill="#0a46f2"/>
<rect x="146.4" y="64.2" width="34.4" height="34.3" rx="7" fill="#7a10f2"/>
<rect x="184.7" y="42.8" width="34.3" height="34.4" rx="7" fill="#12b8a6"/>
</g>
<rect x="153.3" y="36.7" width="20.6" height="11.7" rx="1.5" fill="#fff"/>
<rect x="151" y="75.6" width="25" height="11.5" rx="1.5" fill="#fff"/>
<rect x="189" y="53.9" width="25.7" height="11.7" rx="1.5" fill="#fff"/>
<text x="157.2" y="45.3" font-family="Liberation Sans" font-weight="bold" font-size="6.4" fill="#2a4ad0">MP4</text>
<text x="153.6" y="84" font-family="Liberation Sans" font-weight="bold" font-size="6.2" fill="#7a22d8">MPEG</text>
<text x="191" y="62.5" font-family="Liberation Sans" font-weight="bold" font-size="6.2" fill="#12a898">WEBM</text>
</svg><div class="ttl">Convert Video</div></div>
<div class="qc" style="left:820px"><svg class="img" width="238" height="158" viewBox="0 0 238 158" preserveAspectRatio="none">
<defs><clipPath id="q4a"><rect x="21.7" y="76.8" width="100.3" height="60.2" rx="3"/></clipPath><clipPath id="q4b"><rect x="66.5" y="22" width="146.5" height="88.6" rx="3"/></clipPath></defs>
<rect width="238" height="158" fill="#463e5a"/>
<g filter="url(#qsh)"><rect x="21.7" y="76.8" width="100.3" height="60.2" rx="3" fill="#8e9196"/></g>
<g clip-path="url(#q4a)"><g transform="translate(21.7 76.8) scale(0.6846416382252559 0.6794582392776525)"><rect width="146.5" height="89" fill="#8e9196"/><rect width="146.5" height="32" fill="#b6a58c"/><rect y="0" width="146.5" height="3" fill="#9a8a78"/><rect y="19" width="146.5" height="2" fill="#a89880"/><rect x="4.0" y="6" width="6" height="9" fill="#5a5a5a"/><rect x="4.0" y="24" width="6" height="9" fill="#4a4a4a"/><rect x="20.5" y="6" width="6" height="9" fill="#5a5a5a"/><rect x="20.5" y="24" width="6" height="9" fill="#4a4a4a"/><rect x="37.0" y="6" width="6" height="9" fill="#5a5a5a"/><rect x="37.0" y="24" width="6" height="9" fill="#4a4a4a"/><rect x="53.5" y="6" width="6" height="9" fill="#5a5a5a"/><rect x="53.5" y="24" width="6" height="9" fill="#4a4a4a"/><rect x="70.0" y="6" width="6" height="9" fill="#5a5a5a"/><rect x="70.0" y="24" width="6" height="9" fill="#4a4a4a"/><rect x="86.5" y="6" width="6" height="9" fill="#5a5a5a"/><rect x="86.5" y="24" width="6" height="9" fill="#4a4a4a"/><rect x="103.0" y="6" width="6" height="9" fill="#5a5a5a"/><rect x="103.0" y="24" width="6" height="9" fill="#4a4a4a"/><rect x="119.5" y="6" width="6" height="9" fill="#5a5a5a"/><rect x="119.5" y="24" width="6" height="9" fill="#4a4a4a"/><rect x="136.0" y="6" width="6" height="9" fill="#5a5a5a"/><rect x="136.0" y="24" width="6" height="9" fill="#4a4a4a"/><rect y="31" width="146.5" height="6" fill="#e8e4dc"/><rect y="36" width="146.5" height="3" fill="#2a2a2a"/><rect y="39" width="146.5" height="15" fill="#b8b6b0"/><rect x="6" y="38" width="3.2" height="17" rx="1.5" fill="#262628"/><rect x="13" y="38" width="3.2" height="17" rx="1.5" fill="#262628"/><rect x="20" y="38" width="3.2" height="17" rx="1.5" fill="#262628"/><rect x="27" y="38" width="3.2" height="17" rx="1.5" fill="#262628"/><rect x="34" y="38" width="3.2" height="17" rx="1.5" fill="#262628"/><rect x="41" y="38" width="3.2" height="17" rx="1.5" fill="#262628"/><rect x="48" y="38" width="3.2" height="17" rx="1.5" fill="#262628"/><rect x="55" y="38" width="3.2" height="17" rx="1.5" fill="#262628"/><rect x="62" y="38" width="3.2" height="17" rx="1.5" fill="#262628"/><rect x="69" y="38" width="3.2" height="17" rx="1.5" fill="#262628"/><rect x="76" y="38" width="3.2" height="17" rx="1.5" fill="#262628"/><rect x="83" y="38" width="3.2" height="17" rx="1.5" fill="#262628"/><rect x="90" y="38" width="3.2" height="17" rx="1.5" fill="#262628"/><rect x="97" y="38" width="3.2" height="17" rx="1.5" fill="#262628"/><rect x="104" y="38" width="3.2" height="17" rx="1.5" fill="#262628"/><rect x="111" y="38" width="3.2" height="17" rx="1.5" fill="#262628"/><rect x="118" y="38" width="3.2" height="17" rx="1.5" fill="#262628"/><rect x="125" y="38" width="3.2" height="17" rx="1.5" fill="#262628"/><rect x="132" y="38" width="3.2" height="17" rx="1.5" fill="#262628"/><rect x="139" y="38" width="3.2" height="17" rx="1.5" fill="#262628"/><rect y="53" width="146.5" height="4" fill="#3a3a3c"/><rect y="57" width="146.5" height="4" fill="#a0a0a0"/><rect y="61" width="146.5" height="2" fill="#5a5a5a"/><ellipse cx="30" cy="27" rx="3.2" ry="3.8" fill="#2a1e18"/><path d="M27 31 L34 31 L35 48 L26 48 Z" fill="#d49a84"/><rect x="26.5" y="35" width="8" height="5" fill="#c83838"/><path d="M26 47 L35 47 L37 58 L32 74 L35 77 L29 78 L28 60 L20 66 L18 62 L25 55 Z" fill="#2c3c5c"/><path d="M34 33 L40 42 L38 44 L33 38 Z" fill="#d49a84"/></g></g>
<g filter="url(#qsh)"><rect x="66.5" y="22" width="146.5" height="88.6" rx="3" fill="#8e9196"/></g>
<g clip-path="url(#q4b)"><g transform="translate(66.5 22) scale(1.0 1.0)"><rect width="146.5" height="89" fill="#8e9196"/><rect width="146.5" height="32" fill="#b6a58c"/><rect y="0" width="146.5" height="3" fill="#9a8a78"/><rect y="19" width="146.5" height="2" fill="#a89880"/><rect x="4.0" y="6" width="6" height="9" fill="#5a5a5a"/><rect x="4.0" y="24" width="6" height="9" fill="#4a4a4a"/><rect x="20.5" y="6" width="6" height="9" fill="#5a5a5a"/><rect x="20.5" y="24" width="6" height="9" fill="#4a4a4a"/><rect x="37.0" y="6" width="6" height="9" fill="#5a5a5a"/><rect x="37.0" y="24" width="6" height="9" fill="#4a4a4a"/><rect x="53.5" y="6" width="6" height="9" fill="#5a5a5a"/><rect x="53.5" y="24" width="6" height="9" fill="#4a4a4a"/><rect x="70.0" y="6" width="6" height="9" fill="#5a5a5a"/><rect x="70.0" y="24" width="6" height="9" fill="#4a4a4a"/><rect x="86.5" y="6" width="6" height="9" fill="#5a5a5a"/><rect x="86.5" y="24" width="6" height="9" fill="#4a4a4a"/><rect x="103.0" y="6" width="6" height="9" fill="#5a5a5a"/><rect x="103.0" y="24" width="6" height="9" fill="#4a4a4a"/><rect x="119.5" y="6" width="6" height="9" fill="#5a5a5a"/><rect x="119.5" y="24" width="6" height="9" fill="#4a4a4a"/><rect x="136.0" y="6" width="6" height="9" fill="#5a5a5a"/><rect x="136.0" y="24" width="6" height="9" fill="#4a4a4a"/><rect y="31" width="146.5" height="6" fill="#e8e4dc"/><rect y="36" width="146.5" height="3" fill="#2a2a2a"/><rect y="39" width="146.5" height="15" fill="#b8b6b0"/><rect x="6" y="38" width="3.2" height="17" rx="1.5" fill="#262628"/><rect x="13" y="38" width="3.2" height="17" rx="1.5" fill="#262628"/><rect x="20" y="38" width="3.2" height="17" rx="1.5" fill="#262628"/><rect x="27" y="38" width="3.2" height="17" rx="1.5" fill="#262628"/><rect x="34" y="38" width="3.2" height="17" rx="1.5" fill="#262628"/><rect x="41" y="38" width="3.2" height="17" rx="1.5" fill="#262628"/><rect x="48" y="38" width="3.2" height="17" rx="1.5" fill="#262628"/><rect x="55" y="38" width="3.2" height="17" rx="1.5" fill="#262628"/><rect x="62" y="38" width="3.2" height="17" rx="1.5" fill="#262628"/><rect x="69" y="38" width="3.2" height="17" rx="1.5" fill="#262628"/><rect x="76" y="38" width="3.2" height="17" rx="1.5" fill="#262628"/><rect x="83" y="38" width="3.2" height="17" rx="1.5" fill="#262628"/><rect x="90" y="38" width="3.2" height="17" rx="1.5" fill="#262628"/><rect x="97" y="38" width="3.2" height="17" rx="1.5" fill="#262628"/><rect x="104" y="38" width="3.2" height="17" rx="1.5" fill="#262628"/><rect x="111" y="38" width="3.2" height="17" rx="1.5" fill="#262628"/><rect x="118" y="38" width="3.2" height="17" rx="1.5" fill="#262628"/><rect x="125" y="38" width="3.2" height="17" rx="1.5" fill="#262628"/><rect x="132" y="38" width="3.2" height="17" rx="1.5" fill="#262628"/><rect x="139" y="38" width="3.2" height="17" rx="1.5" fill="#262628"/><rect y="53" width="146.5" height="4" fill="#3a3a3c"/><rect y="57" width="146.5" height="4" fill="#a0a0a0"/><rect y="61" width="146.5" height="2" fill="#5a5a5a"/><ellipse cx="118" cy="27" rx="3.2" ry="3.8" fill="#2a1e18"/><path d="M115 31 L122 31 L123 48 L114 48 Z" fill="#d49a84"/><rect x="114.5" y="35" width="8" height="5" fill="#c83838"/><path d="M114 47 L123 47 L125 58 L120 74 L123 77 L117 78 L116 60 L108 66 L106 62 L113 55 Z" fill="#2c3c5c"/><path d="M122 33 L128 42 L126 44 L121 38 Z" fill="#d49a84"/></g></g>
<path d="M38.9 106.6 C36 80 55 62 82 60.5" fill="none" stroke="#f9a00e" stroke-width="3.4"/>
<path d="M79 52 L91 60.5 L79 69 Z" fill="#f9a00e"/>
<rect x="26.8" y="26.8" width="33.8" height="34.2" rx="7" fill="#7b4ff3"/>
<path d="M34 44 L42.5 37 L42.5 51 Z M42.5 44 L51 37 L51 51 Z" fill="#fff"/>
<circle cx="209" cy="27" r="15.5" fill="#1c1c1c" stroke="#e9b64e" stroke-width="1.6"/><path d="M200.5 23 L205 27 L209 20.5 L213 27 L217.5 23 L216 31 L202 31 Z" fill="#f2c15a"/><rect x="202" y="32.5" width="14" height="1.8" fill="#f2c15a"/>
</svg><div class="ttl">Reverse Video</div></div>
<div class="qc" style="left:1083px"><svg class="img" width="238" height="158" viewBox="0 0 238 158" preserveAspectRatio="none">
<defs><clipPath id="q5c"><rect x="22" y="22" width="191" height="115.4" rx="4"/></clipPath>
<radialGradient id="bell" cx="0.45" cy="0.5" r="0.55"><stop offset="0" stop-color="#e8c060"/><stop offset="0.35" stop-color="#b07818"/><stop offset="0.6" stop-color="#f0e0b0"/><stop offset="1" stop-color="#a07020"/></radialGradient></defs>
<rect width="238" height="158" fill="#5a1f62"/>
<g filter="url(#qsh)"><rect x="22" y="22" width="191" height="115.4" rx="4" fill="#ccc"/></g>
<g clip-path="url(#q5c)">
<rect x="22" y="22" width="191" height="116" fill="#c8d0d8"/>
<g filter="url(#qb)">
<rect x="22" y="22" width="100" height="60" fill="#d8dee6"/>
<path d="M185 22 L213 22 L213 120 L195 110 C185 80 180 50 185 22 Z" fill="#3a4a3a"/>
<path d="M100 138 L110 105 C130 95 175 95 195 105 L205 138 Z" fill="#b8bab4"/>
<path d="M142 44 C140 28 150 22 160 22 C172 22 182 30 180 48 L176 60 L145 60 Z" fill="#6a4a34"/>
<ellipse cx="155" cy="65" rx="21" ry="27" fill="#e0b0a0"/>
<rect x="143" y="88" width="24" height="12" fill="#d8a898"/>
<path d="M140 82 Q152 78 162 82" stroke="#5a3a2a" stroke-width="2.5" fill="none"/>
</g>
<g filter="url(#qb2)">
<path d="M90 78 L140 72 L142 82 L92 92 Z" fill="#e8d4a0"/>
<ellipse cx="52" cy="95" rx="30" ry="36" fill="url(#bell)"/>
<ellipse cx="57" cy="95" rx="14" ry="20" fill="#a06a18"/>
<path d="M92 100 L140 88 L145 104 L98 118 Z" fill="#c89840"/>
<path d="M92 62 C100 54 118 55 124 64 L120 76 L95 78 Z" fill="#e8b8a0"/>
<path d="M118 95 C125 86 145 88 150 100 L155 120 C150 132 130 134 120 125 Z" fill="#e0a890"/>
</g>
<circle cx="130" cy="74" r="13" fill="#fff" opacity="0.2"/>
<path d="M126 67 L137 74 L126 81 Z" fill="#fff"/>
<rect x="28" y="124" width="178" height="0.8" fill="#fff" opacity="0.6"/>
</g>
<circle cx="209" cy="27" r="15.5" fill="#1c1c1c" stroke="#e9b64e" stroke-width="1.6"/><path d="M200.5 23 L205 27 L209 20.5 L213 27 L217.5 23 L216 31 L202 31 Z" fill="#f2c15a"/><rect x="202" y="32.5" width="14" height="1.8" fill="#f2c15a"/>
<g filter="url(#qsh)"><rect x="174" y="98" width="33.5" height="34" rx="6" fill="#f50a6c"/></g>
<circle cx="190.7" cy="115" r="11.5" fill="#fff"/>
<path d="M183.5 112 L186 112 L190 108.5 L190 121.5 L186 118 L183.5 118 Z" fill="#f50a6c"/>
<path d="M192.5 112.5 L196.5 117.5 M196.5 112.5 L192.5 117.5" stroke="#f50a6c" stroke-width="1.4"/>
</svg><div class="ttl">Remove Audio</div></div>
<div class="qc" style="left:1346px"><svg class="img" width="238" height="158" viewBox="0 0 238 158" preserveAspectRatio="none">
<defs><clipPath id="q6a"><rect x="22" y="76.8" width="99.5" height="60.2" rx="3"/></clipPath><clipPath id="q6b"><rect x="66.3" y="22" width="146.5" height="88.6" rx="3"/></clipPath></defs>
<defs><linearGradient id="tsky" x1="0" y1="0" x2="0" y2="1"><stop offset="0" stop-color="#78b2d0"/><stop offset="0.22" stop-color="#7aa8a0"/><stop offset="0.4" stop-color="#6a9c48"/><stop offset="0.62" stop-color="#b8b890"/><stop offset="0.8" stop-color="#e2cca6"/><stop offset="1" stop-color="#e6d2b0"/></linearGradient></defs><rect width="238" height="158" fill="#1f4a42"/>
<g filter="url(#qsh)"><rect x="22" y="76.8" width="99.5" height="60.2" rx="3" fill="#ccc"/></g>
<g clip-path="url(#q6a)"><g transform="translate(22 76.8) scale(0.6791808873720137 0.6794582392776525)"><g filter="url(#qb2)"><rect width="146.5" height="89" fill="url(#tsky)"/></g><path d="M2 71 C6 58 22 52 38 54 L46 68 L30 72 Z" fill="#4a4a3a"/><path d="M22 52 C32 34 60 26 82 28 C98 30 110 38 114 47 L110 55 C85 66 45 66 22 58 Z" fill="#2c3134"/><path d="M30 40 L100 36 M40 50 L105 46 M60 28 L58 60 M82 28 L84 60" stroke="#5a6060" stroke-width="0.6"/><path d="M22 57 C45 66 88 66 112 53 L114 58 C98 70 50 72 26 64 Z" fill="#a88a3a"/><path d="M40 60 C55 68 90 66 104 58 L98 68 C80 72 55 72 42 66 Z" fill="#8a7030"/><path d="M106 44 C112 38 122 39 126 43 C126 47 120 49 110 50 Z" fill="#444438"/><path d="M83 60 L92 60 L95 74 L85 75 Z M112 52 L120 52 L124 70 L115 70 Z M48 63 L58 63 L56 74 L46 74 Z" fill="#3e3e34"/></g></g>
<g filter="url(#qsh)"><rect x="66.3" y="22" width="146.5" height="88.6" rx="3" fill="#ccc"/></g>
<g clip-path="url(#q6b)"><g transform="translate(66.3 22) scale(1.0 1.0)"><g filter="url(#qb2)"><rect width="146.5" height="89" fill="url(#tsky)"/></g><path d="M2 71 C6 58 22 52 38 54 L46 68 L30 72 Z" fill="#4a4a3a"/><path d="M22 52 C32 34 60 26 82 28 C98 30 110 38 114 47 L110 55 C85 66 45 66 22 58 Z" fill="#2c3134"/><path d="M30 40 L100 36 M40 50 L105 46 M60 28 L58 60 M82 28 L84 60" stroke="#5a6060" stroke-width="0.6"/><path d="M22 57 C45 66 88 66 112 53 L114 58 C98 70 50 72 26 64 Z" fill="#a88a3a"/><path d="M40 60 C55 68 90 66 104 58 L98 68 C80 72 55 72 42 66 Z" fill="#8a7030"/><path d="M106 44 C112 38 122 39 126 43 C126 47 120 49 110 50 Z" fill="#444438"/><path d="M83 60 L92 60 L95 74 L85 75 Z M112 52 L120 52 L124 70 L115 70 Z M48 63 L58 63 L56 74 L46 74 Z" fill="#3e3e34"/></g></g>
<path d="M41 108.5 C38 80 58 62 84 60.5" fill="none" stroke="#f9a00e" stroke-width="3.4"/>
<path d="M81 52 L93 60.5 L81 69 Z" fill="#f9a00e"/>
<rect x="27" y="26.8" width="33.4" height="34.2" rx="7" fill="#ff6a00"/>
<circle cx="43.7" cy="43.9" r="10.5" fill="#fff"/>
<path d="M37.5 47 A6.5 6.5 0 0 1 50 44" fill="none" stroke="#ff6a00" stroke-width="1.6"/>
<circle cx="43" cy="46.5" r="1.8" fill="none" stroke="#ff6a00" stroke-width="1.3"/><path d="M44.2 45.3 L48 41" stroke="#ff6a00" stroke-width="1.3"/>
</svg><div class="ttl">Speed Video</div></div>

<div class="a" style="left:1525px;top:477px;width:54px;height:206px;background:linear-gradient(90deg,rgba(34,34,34,0) 0%,rgba(34,34,34,0.3) 45%,rgba(34,34,34,0.85) 100%)"></div>
<div class="a" style="left:1533px;top:555px;width:52px;height:52px;border-radius:50%;background:rgba(90,90,90,0.22)"></div>
<svg class="a" style="left:1552px;top:572px" width="12" height="16" viewBox="0 0 12 16"><path d="M2.5 1.5 L9 8 L2.5 14.5" fill="none" stroke="#e6e6e6" stroke-width="2.2"/></svg>
<!-- explore -->
<div class="t b" style="left:32.5px;top:730.5px;font-size:24.4px;letter-spacing:0.5px;color:#e0e0e0">Explore template collection</div>
<div class="a" style="left:372px;top:722px;width:40px;height:40px;border-radius:50%;background:#2e2e2e"><svg width="40" height="40" viewBox="0 0 40 40" style="position:absolute;left:0;top:0"><path d="M12 20 H27.5 M21 13.5 L27.5 20 L21 26.5" fill="none" stroke="#e2e2e2" stroke-width="2.3" stroke-linecap="round" stroke-linejoin="round"/></svg></div>

<svg class="a" style="left:0;top:0" width="1579" height="902" viewBox="0 0 1579 902">
<defs>
<clipPath id="t1"><rect x="32" y="772" width="218" height="140" rx="9"/></clipPath>
<clipPath id="t2"><rect x="275" y="772" width="217" height="140" rx="9"/></clipPath>
<clipPath id="t3"><rect x="517" y="772" width="218" height="140" rx="9"/></clipPath>
<clipPath id="t4"><rect x="760" y="772" width="217" height="140" rx="9"/></clipPath>
<clipPath id="t5"><rect x="1002" y="772" width="218" height="140" rx="9"/></clipPath>
<clipPath id="t6"><rect x="1245" y="772" width="217" height="140" rx="9"/></clipPath>
<clipPath id="t7"><rect x="1487" y="772" width="218" height="140" rx="9"/></clipPath>
<filter id="tb6"><feGaussianBlur stdDeviation="5"/></filter>
<filter id="tb1"><feGaussianBlur stdDeviation="0.6"/></filter>
<radialGradient id="berry" cx="0.35" cy="0.35" r="0.65"><stop offset="0" stop-color="#ff6a6a"/><stop offset="0.4" stop-color="#c01818"/><stop offset="1" stop-color="#600808"/></radialGradient>
<linearGradient id="fade7" x1="0" y1="0" x2="1" y2="0"><stop offset="0" stop-color="#222" stop-opacity="0"/><stop offset="0.42" stop-color="#222" stop-opacity="0"/><stop offset="0.7" stop-color="#222" stop-opacity="0.35"/><stop offset="1" stop-color="#222" stop-opacity="0.95"/></linearGradient>
</defs>
<!-- t1 -->
<g clip-path="url(#t1)">
<rect x="32" y="772" width="218" height="140" fill="#e59b1f"/>
<rect x="43.7" y="801" width="197.6" height="110" fill="#040906"/>
<g stroke="#f2b233" stroke-width="1.6" fill="none">
<circle cx="77.5" cy="822" r="2.8"/><path d="M77.5 801 V815 M77.5 829 V843 M60 822 H70 M85 822 H95 M65 810 L71 816 M84 828 L90 834 M65 834 L71 828 M84 816 L90 810"/>
<circle cx="100" cy="847" r="2.8"/><path d="M100 832 V840 M100 854 V868 M83 847 H93 M107 847 H118 M88 835 L94 841 M106 853 L112 859 M88 859 L94 853 M106 841 L112 835"/>
<path d="M107 806 L110 808 L107 811 L105 810"/>
<path d="M111 825 L115 829 L111 833 L107 829 Z"/><path d="M70 848 L74 853 L70 857 L66 853 Z"/>
</g>
<path d="M132 845 L170 800 M145 850 L190 808" stroke="#4a2a20" stroke-width="0.8"/>
<path d="M72 902 C72 890 80 887 100 887 C125 887 132 892 132 902 Z" fill="#b9801e"/>
<path d="M149 902 C150 890 160 887 185 887 C205 887 211 892 211 902 Z" fill="#b9801e"/>
<path d="M132 896 C138 888 145 888 150 895" stroke="#8a9aa0" stroke-width="0.8" fill="none"/>
</g>
<!-- t2 -->
<g clip-path="url(#t2)">
<rect x="275" y="772" width="217" height="140" fill="#f9f096"/>
<rect x="285" y="791" width="196.4" height="120" fill="#fdfcfd"/>
<text x="366" y="826.6" font-family="Liberation Sans" font-weight="bold" font-size="10.4" fill="#b28af4">New Year</text>
<g fill="none" stroke="#3cabaa" stroke-width="2.1" stroke-linecap="round" stroke-linejoin="round">
<path d="M327.5 825.5 C322 832 330 836 340 832 C350 828 358 826 360 832 C361 838 352 838 346 836"/>
<path d="M346 825 C334 828 325 840 326 852 C327 862 336 866 344 862 C350 858 353 852 354 848 L351 862 C349 870 344 876 334 879 C322 882 318 876 326 873 C336 869 350 869 361 869.5"/>
<path d="M368 849 C362 848 358 856 360 861 C362 865 368 862 369 856 C370 851 368 848 366 849"/>
<path d="M383 850 C377 848 372 856 374 861 C376 865 381 862 383 856 L382 862 C383 865 386 864 388 862"/>
<path d="M388 862 C396 852 406 838 404 834 C402 830 396 840 394 850 C392 858 394 864 398 863 C402 862 404 858 405 856"/>
<path d="M405 856 C408 850 411 848 410 846 M405 845 C402 850 408 854 409 858 C410 862 404 864 400 862"/>
</g>
<path d="M406.5 876 L415.5 851 L431 862.5 Z" fill="#f4dc78"/><path d="M406.5 876 L431 862.5 L429 866 L409 877 Z" fill="#eaa050"/>
<path d="M415.5 851 C418 848 424 850 431 862.5 C426 860 420 856 415.5 851 Z" fill="#e0a060"/>
<path d="M422 850 C426 846 420 843 424 840 C428 838 426 835 428 834" stroke="#a38ae8" stroke-width="2.2" fill="none" stroke-linecap="round"/>
<path d="M434 851 C440 850 436 846 442 845 C446 844 443 840 445 839" stroke="#f2a8c8" stroke-width="2.2" fill="none" stroke-linecap="round"/>
<path d="M420 838 L421 841 L424 842 L421 843 L420 846 L419 843 L416 842 L419 841 Z" fill="#f0b8d8"/>
<path d="M444 853 L445 855.5 L447.5 856 L445 857 L444 859.5 L443 857 L440.5 856 L443 855.5 Z" fill="#c0a8f0"/>
<circle cx="435" cy="838.5" r="1.1" fill="#f08050"/><circle cx="442.5" cy="839" r="1" fill="#7090f0"/><circle cx="438" cy="860" r="1.1" fill="#60d0a0"/><circle cx="434" cy="843" r="0.8" fill="#60d0a0"/>
</g>
<!-- t3 -->
<g clip-path="url(#t3)">
<rect x="517" y="772" width="218" height="140" fill="#fde8dc"/>
<circle cx="578" cy="806" r="52" fill="#708af0"/>
<path d="M517 772 L555 772 C558 776 562 776 566 774 L592 847 L568 857 L560 836 L517 866 Z" fill="#1f6a6c"/><path d="M556 830 L568 857" stroke="#185a5c" stroke-width="1"/>
<path d="M548 800 L552 815" stroke="#3a8a8a" stroke-width="0.8"/><rect x="548" y="813" width="3" height="3" fill="#e04a2a"/>
<circle cx="662" cy="920" r="45" fill="#fbf1ee"/>
<path d="M552 902 L558 886 L566 886 L574 898 L576 886 L588 886 L584 902 Z" fill="#6ab8f4"/>
<path d="M608 890 L642 884 L644 902 L610 902 Z" fill="#ea6a9c"/>
<path d="M650 886 L660 886 L664 896 L670 886 L680 886 L684 896 L690 884 L702 886 L694 902 L656 902 Z" fill="#6a88f0"/>
</g>
<!-- t4 -->
<g clip-path="url(#t4)">
<rect x="760" y="772" width="217" height="140" fill="#1a2414"/>
<g filter="url(#tb1)">
<path d="M760 772 L977 772 L977 830 L930 860 L880 902 L760 902 Z" fill="#263c1e"/>
<path d="M790 780 L840 830 M800 800 L860 870 M830 775 L870 840 M870 780 L900 840 M900 790 L960 830 M780 830 L830 880 M850 850 L900 902 M920 800 L970 850" stroke="#3e5a30" stroke-width="2.5" fill="none"/>
<path d="M940 860 L977 835 L977 902 L925 902 Z" fill="#6a0a0e"/>
<path d="M760 840 C775 835 790 850 790 870 L785 902 L760 902 Z" fill="#c8141a"/>
</g>
<path d="M830 860 L880 810 L930 780 M880 810 L900 850" stroke="#6a4a3a" stroke-width="1.5" fill="none"/>
<circle cx="809" cy="780" r="4.6" fill="url(#berry)"/><circle cx="818" cy="782" r="4.3" fill="url(#berry)"/><circle cx="833" cy="783" r="5.3" fill="url(#berry)"/><circle cx="848" cy="787" r="4.1" fill="url(#berry)"/><circle cx="858" cy="786" r="5.1" fill="url(#berry)"/><circle cx="880" cy="782" r="4.7" fill="url(#berry)"/><circle cx="893" cy="782" r="4.1" fill="url(#berry)"/><circle cx="905" cy="785" r="5.0" fill="url(#berry)"/><circle cx="930" cy="790" r="4.1" fill="url(#berry)"/><circle cx="955" cy="784" r="4.9" fill="url(#berry)"/><circle cx="965" cy="795" r="4.1" fill="url(#berry)"/><circle cx="962" cy="815" r="4.2" fill="url(#berry)"/><circle cx="945" cy="820" r="4.8" fill="url(#berry)"/><circle cx="925" cy="806" r="5.7" fill="url(#berry)"/><circle cx="912" cy="810" r="4.2" fill="url(#berry)"/><circle cx="895" cy="815" r="4.4" fill="url(#berry)"/><circle cx="880" cy="835" r="5.3" fill="url(#berry)"/><circle cx="870" cy="826" r="5.9" fill="url(#berry)"/><circle cx="855" cy="840" r="5.2" fill="url(#berry)"/><circle cx="835" cy="815" r="4.8" fill="url(#berry)"/><circle cx="820" cy="810" r="6.0" fill="url(#berry)"/><circle cx="805" cy="827" r="4.1" fill="url(#berry)"/><circle cx="790" cy="832" r="5.7" fill="url(#berry)"/><circle cx="800" cy="855" r="4.6" fill="url(#berry)"/><circle cx="812" cy="865" r="4.3" fill="url(#berry)"/><circle cx="828" cy="852" r="4.2" fill="url(#berry)"/><circle cx="845" cy="866" r="4.6" fill="url(#berry)"/><circle cx="862" cy="880" r="5.6" fill="url(#berry)"/><circle cx="878" cy="895" r="4.4" fill="url(#berry)"/><circle cx="895" cy="888" r="5.2" fill="url(#berry)"/><circle cx="910" cy="870" r="5.3" fill="url(#berry)"/><circle cx="925" cy="860" r="4.7" fill="url(#berry)"/><circle cx="940" cy="878" r="5.1" fill="url(#berry)"/><circle cx="952" cy="860" r="4.1" fill="url(#berry)"/><circle cx="970" cy="870" r="4.1" fill="url(#berry)"/><circle cx="960" cy="895" r="4.4" fill="url(#berry)"/><circle cx="935" cy="895" r="5.4" fill="url(#berry)"/><circle cx="850" cy="893" r="4.9" fill="url(#berry)"/><circle cx="822" cy="890" r="4.6" fill="url(#berry)"/><circle cx="788" cy="898" r="5.2" fill="url(#berry)"/><circle cx="900" cy="800" r="4.9" fill="url(#berry)"/><circle cx="874" cy="805" r="4.6" fill="url(#berry)"/><circle cx="842" cy="800" r="5.6" fill="url(#berry)"/><circle cx="815" cy="800" r="5.4" fill="url(#berry)"/>
</g>
<g clip-path="url(#t4)"><circle cx="900" cy="776" r="5.4" fill="url(#berry)"/><circle cx="915" cy="778" r="5.6" fill="url(#berry)"/><circle cx="925" cy="786" r="6.3" fill="url(#berry)"/><circle cx="940" cy="776" r="5.4" fill="url(#berry)"/><circle cx="950" cy="795" r="5.5" fill="url(#berry)"/><circle cx="935" cy="800" r="5.7" fill="url(#berry)"/><circle cx="880" cy="795" r="4.9" fill="url(#berry)"/><circle cx="870" cy="790" r="5.5" fill="url(#berry)"/><circle cx="890" cy="805" r="5.8" fill="url(#berry)"/><circle cx="905" cy="822" r="6.1" fill="url(#berry)"/><circle cx="920" cy="830" r="4.7" fill="url(#berry)"/><circle cx="935" cy="838" r="5.1" fill="url(#berry)"/><circle cx="950" cy="830" r="4.7" fill="url(#berry)"/><circle cx="965" cy="822" r="6.1" fill="url(#berry)"/><circle cx="955" cy="845" r="5.9" fill="url(#berry)"/><circle cx="900" cy="840" r="4.6" fill="url(#berry)"/><circle cx="885" cy="855" r="6.5" fill="url(#berry)"/><circle cx="870" cy="865" r="6.4" fill="url(#berry)"/><circle cx="965" cy="845" r="5.8" fill="url(#berry)"/><circle cx="940" cy="850" r="5.7" fill="url(#berry)"/><circle cx="915" cy="848" r="4.8" fill="url(#berry)"/></g>
<!-- t5 -->
<g clip-path="url(#t5)">
<rect x="1002" y="772" width="218" height="140" fill="#f44646"/>
<rect x="1015" y="791.2" width="194.3" height="120" fill="#e6e7e3"/><circle cx="1049.7" cy="834.4" r="20.5" fill="#d6a262"/><circle cx="1048.7" cy="832.4" r="17.5" fill="#f1d2d4"/><circle cx="1061.2" cy="832.4" r="4" fill="#f7e0e2"/><circle cx="1057.54235336459" cy="841.2353147638171" r="4" fill="#f7e0e2"/><circle cx="1048.7099540838842" cy="844.899996036648" r="4" fill="#f7e0e2"/><circle cx="1039.87172943975" cy="841.2493863581054" r="4" fill="#f7e0e2"/><circle cx="1036.2000158534058" cy="832.4199081614561" r="4" fill="#f7e0e2"/><circle cx="1039.8435862600966" cy="823.578779241644" r="4" fill="#f7e0e2"/><circle cx="1048.6701377735965" cy="819.9000356701536" r="4" fill="#f7e0e2"/><circle cx="1057.5141653626054" cy="823.5365644944723" r="4" fill="#f7e0e2"/><circle cx="1045.7" cy="828.4" r="7" fill="#f0905a"/><circle cx="1054.7" cy="829.4" r="5.5" fill="#f4b070"/><circle cx="1092.2" cy="834.4" r="20.5" fill="#d6a262"/><circle cx="1091.2" cy="832.4" r="17.5" fill="#f1d2d4"/><circle cx="1103.7" cy="832.4" r="4" fill="#f7e0e2"/><circle cx="1100.04235336459" cy="841.2353147638171" r="4" fill="#f7e0e2"/><circle cx="1091.2099540838842" cy="844.899996036648" r="4" fill="#f7e0e2"/><circle cx="1082.37172943975" cy="841.2493863581054" r="4" fill="#f7e0e2"/><circle cx="1078.7000158534058" cy="832.4199081614561" r="4" fill="#f7e0e2"/><circle cx="1082.3435862600966" cy="823.578779241644" r="4" fill="#f7e0e2"/><circle cx="1091.1701377735965" cy="819.9000356701536" r="4" fill="#f7e0e2"/><circle cx="1100.0141653626054" cy="823.5365644944723" r="4" fill="#f7e0e2"/><circle cx="1088.2" cy="828.4" r="7" fill="#6a1a3a"/><circle cx="1097.2" cy="829.4" r="5.5" fill="#2a1a2a"/><circle cx="1092.2" cy="837.4" r="5.5" fill="#e8d030"/><circle cx="1086.2" cy="836.4" r="4" fill="#9a6ad8"/><circle cx="1134.6" cy="838" r="20.5" fill="#d6a262"/><circle cx="1133.6" cy="836" r="17.5" fill="#f1d2d4"/><circle cx="1146.1" cy="836.0" r="4" fill="#f7e0e2"/><circle cx="1142.44235336459" cy="844.8353147638171" r="4" fill="#f7e0e2"/><circle cx="1133.609954083884" cy="848.499996036648" r="4" fill="#f7e0e2"/><circle cx="1124.7717294397498" cy="844.8493863581054" r="4" fill="#f7e0e2"/><circle cx="1121.1000158534057" cy="836.0199081614561" r="4" fill="#f7e0e2"/><circle cx="1124.7435862600964" cy="827.1787792416441" r="4" fill="#f7e0e2"/><circle cx="1133.5701377735963" cy="823.5000356701536" r="4" fill="#f7e0e2"/><circle cx="1142.4141653626052" cy="827.1365644944723" r="4" fill="#f7e0e2"/><circle cx="1130.6" cy="832" r="7" fill="#d83a3a"/><circle cx="1139.6" cy="833" r="5.5" fill="#2a2a4a"/><circle cx="1134.6" cy="841" r="5.5" fill="#9a6ad8"/><circle cx="1128.6" cy="840" r="4" fill="#5a9a3a"/><circle cx="1175.5" cy="838.8" r="20.5" fill="#d6a262"/><circle cx="1174.5" cy="836.8" r="17.5" fill="#f1d2d4"/><circle cx="1187.0" cy="836.8" r="4" fill="#f7e0e2"/><circle cx="1183.34235336459" cy="845.6353147638171" r="4" fill="#f7e0e2"/><circle cx="1174.5099540838842" cy="849.2999960366479" r="4" fill="#f7e0e2"/><circle cx="1165.67172943975" cy="845.6493863581054" r="4" fill="#f7e0e2"/><circle cx="1162.0000158534058" cy="836.819908161456" r="4" fill="#f7e0e2"/><circle cx="1165.6435862600965" cy="827.978779241644" r="4" fill="#f7e0e2"/><circle cx="1174.4701377735964" cy="824.3000356701535" r="4" fill="#f7e0e2"/><circle cx="1183.3141653626053" cy="827.9365644944722" r="4" fill="#f7e0e2"/><circle cx="1171.5" cy="832.8" r="7" fill="#f0a070"/><circle cx="1180.5" cy="833.8" r="5.5" fill="#c8303a"/><circle cx="1175.5" cy="841.8" r="5.5" fill="#2a3a6a"/><circle cx="1049.7" cy="878" r="20.5" fill="#d6a262"/><circle cx="1048.7" cy="876" r="17.5" fill="#f1d2d4"/><circle cx="1061.2" cy="876.0" r="4" fill="#f7e0e2"/><circle cx="1057.54235336459" cy="884.8353147638171" r="4" fill="#f7e0e2"/><circle cx="1048.7099540838842" cy="888.499996036648" r="4" fill="#f7e0e2"/><circle cx="1039.87172943975" cy="884.8493863581054" r="4" fill="#f7e0e2"/><circle cx="1036.2000158534058" cy="876.0199081614561" r="4" fill="#f7e0e2"/><circle cx="1039.8435862600966" cy="867.1787792416441" r="4" fill="#f7e0e2"/><circle cx="1048.6701377735965" cy="863.5000356701536" r="4" fill="#f7e0e2"/><circle cx="1057.5141653626054" cy="867.1365644944723" r="4" fill="#f7e0e2"/><circle cx="1045.7" cy="872" r="7" fill="#c01828"/><circle cx="1054.7" cy="873" r="5.5" fill="#2a1a2a"/><circle cx="1049.7" cy="881" r="5.5" fill="#4a9a3a"/><circle cx="1130" cy="881" r="20.5" fill="#d6a262"/><circle cx="1129" cy="879" r="17.5" fill="#f1d2d4"/><circle cx="1141.5" cy="879.0" r="4" fill="#f7e0e2"/><circle cx="1137.84235336459" cy="887.8353147638171" r="4" fill="#f7e0e2"/><circle cx="1129.0099540838842" cy="891.499996036648" r="4" fill="#f7e0e2"/><circle cx="1120.17172943975" cy="887.8493863581054" r="4" fill="#f7e0e2"/><circle cx="1116.5000158534058" cy="879.0199081614561" r="4" fill="#f7e0e2"/><circle cx="1120.1435862600965" cy="870.1787792416441" r="4" fill="#f7e0e2"/><circle cx="1128.9701377735964" cy="866.5000356701536" r="4" fill="#f7e0e2"/><circle cx="1137.8141653626053" cy="870.1365644944723" r="4" fill="#f7e0e2"/><circle cx="1126" cy="875" r="7" fill="#5a9a3a"/><circle cx="1135" cy="876" r="5.5" fill="#2a2a4a"/><circle cx="1130" cy="884" r="5.5" fill="#3a3a5a"/><circle cx="1174.8" cy="880" r="20.5" fill="#d6a262"/><circle cx="1173.8" cy="878" r="17.5" fill="#f1d2d4"/><circle cx="1186.3" cy="878.0" r="4" fill="#f7e0e2"/><circle cx="1182.64235336459" cy="886.8353147638171" r="4" fill="#f7e0e2"/><circle cx="1173.8099540838841" cy="890.499996036648" r="4" fill="#f7e0e2"/><circle cx="1164.9717294397499" cy="886.8493863581054" r="4" fill="#f7e0e2"/><circle cx="1161.3000158534057" cy="878.0199081614561" r="4" fill="#f7e0e2"/><circle cx="1164.9435862600965" cy="869.1787792416441" r="4" fill="#f7e0e2"/><circle cx="1173.7701377735964" cy="865.5000356701536" r="4" fill="#f7e0e2"/><circle cx="1182.6141653626053" cy="869.1365644944723" r="4" fill="#f7e0e2"/><circle cx="1170.8" cy="874" r="7" fill="#f09040"/><circle cx="1179.8" cy="875" r="5.5" fill="#e8d030"/><circle cx="1174.8" cy="883" r="5.5" fill="#c02040"/>
<circle cx="1189" cy="789.5" r="2" fill="none" stroke="#333" stroke-width="1.2"/>
<rect x="1183" y="792" width="12" height="5" rx="1" fill="#4a4a4a"/>
<clipPath id="orn"><circle cx="1193.8" cy="816" r="18"/></clipPath>
<circle cx="1193.8" cy="816" r="18" fill="#3aa84a"/>
<g clip-path="url(#orn)"><path d="M1174 806 Q1180 802 1186 806 T1198 806 T1210 806 T1222 806 L1222 826 Q1216 830 1210 826 T1198 826 T1186 826 T1174 826 Z" fill="#e63838"/></g>
<circle cx="1194" cy="816" r="4" fill="#fff"/><circle cx="1194" cy="816" r="1.6" fill="#e63838"/><path d="M1182 812 L1185.5 816 L1182 820 L1178.5 816Z M1206 811 L1209.5 815 L1206 819 L1202.5 815Z" fill="#fff"/>
<circle cx="1186" cy="803" r="1.2" fill="#fff"/><circle cx="1200" cy="801" r="1.2" fill="#fff"/><circle cx="1190" cy="829" r="1.2" fill="#fff"/><circle cx="1202" cy="828" r="1.2" fill="#fff"/>
</g>
<!-- t6 -->
<g clip-path="url(#t6)">
<rect x="1245" y="772" width="217" height="140" fill="#3a2a24"/>
<g filter="url(#tb6)">
<rect x="1245" y="772" width="80" height="140" fill="#6a342c"/>
<path d="M1245 790 C1270 780 1300 790 1325 815 L1320 830 C1295 815 1270 808 1245 812 Z" fill="#8c4c40"/>
<ellipse cx="1270" cy="860" rx="25" ry="40" fill="#3a1a16"/>
<rect x="1360" y="772" width="102" height="140" fill="#2a3a2e"/>
<ellipse cx="1350" cy="790" rx="20" ry="15" fill="#e0d4d0"/>
<ellipse cx="1385" cy="815" rx="18" ry="16" fill="#e8dcd8"/>
<rect x="1330" y="800" width="22" height="40" fill="#8a1a24"/>
<rect x="1375" y="830" width="20" height="50" fill="#901c24"/>
<ellipse cx="1365" cy="855" rx="18" ry="14" fill="#c89088"/>
<ellipse cx="1428" cy="800" rx="14" ry="8" fill="#c86860"/>
<ellipse cx="1430" cy="890" rx="25" ry="18" fill="#a02028"/>
<ellipse cx="1320" cy="850" rx="15" ry="20" fill="#3a4a3a"/>
</g>
<text x="1353" y="885.3" text-anchor="middle" font-family="Liberation Serif" font-size="19.5" fill="#f4ece8">Grab these</text>
<text x="1353" y="906" text-anchor="middle" font-family="Liberation Serif" font-size="19.5" fill="#f4ece8">amazing deals</text>
</g>
<!-- t7 -->
<g clip-path="url(#t7)">
<rect x="1487" y="772" width="100" height="140" fill="#f9ccf6"/><circle cx="1500" cy="776" r="2" fill="#fde8fc"/><circle cx="1524" cy="840" r="4" fill="#fcdcf8"/>
<path d="M1530 774 C1545 780 1560 782 1579 786" stroke="#3a5a60" stroke-width="1" fill="none"/>
<rect x="1528" y="774" width="3" height="10" fill="#2a8a7a"/><circle cx="1529.5" cy="788" r="3.5" fill="#e0306a"/>
<rect x="1558" y="782" width="3" height="10" fill="#2a8a7a"/><circle cx="1559.5" cy="796" r="3.5" fill="#2a5ab0"/>
<g fill="none" stroke="#111" stroke-linecap="round">
<path d="M1535 859 C1540 858 1546 840 1550 824 C1552 818 1554 822 1554 830 L1555.5 859 C1560 845 1566 830 1572 822 C1576 818 1578 822 1577 832 L1576 860" stroke-width="2.6"/>
<path d="M1522 877 C1516 872 1506 874 1500 884 C1494 894 1496 904 1506 906" stroke-width="3.2"/>
<path d="M1526 905 C1530 890 1536 876 1540 870 C1543 866 1545 870 1542 880 L1534 906 M1537 896 C1542 888 1548 886 1550 890 L1548 906" stroke-width="2.4"/>
<path d="M1556 906 L1560 890 C1562 886 1566 888 1570 888 M1574 892 L1572 906" stroke-width="2.4"/>
</g>

<rect x="1487" y="772" width="92" height="140" fill="url(#fade7)"/>
</g>
</svg>
<div class="a" style="left:12px;top:881px;width:70px;height:21px;background:#fdb0c0;border-top-right-radius:4px"></div>
<div class="t" style="left:12px;top:887px;font-size:15px;color:#1a2040">-to-video</div>

<svg class="a" style="left:0;top:100px" width="170" height="120" viewBox="0 100 170 120"><path d="M0 202.6 L117 133.3 L109.3 121 L151 117 L128.4 152.1 L121 140 L5 211.7 L0 207 Z" fill="#e31b1b"/></svg>
</body></html>
